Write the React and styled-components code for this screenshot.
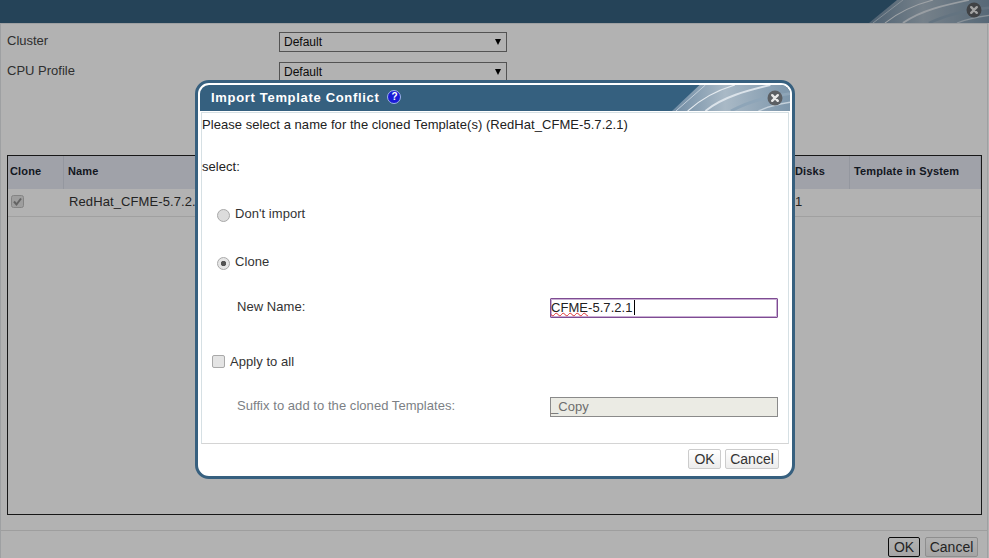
import React from 'react'
import styled, { createGlobalStyle } from 'styled-components'

const Global = createGlobalStyle`
  html, body { margin: 0; padding: 0; background: #fff; }
  body { font: 13px 'Liberation Sans', Arial, sans-serif; color: #444; overflow: hidden; }
`

const Page = styled.div`
  position: relative;
  width: 989px;
  height: 558px;
  display: flex;
  flex-direction: column;
  overflow: hidden;
  background: #fff;
`

const Glass = styled.div`
  position: absolute;
  inset: 0;
  background: rgba(0, 0, 0, 0.3);
`

/* ---- dialog header, shared by both dialogs ---- */
const HeaderBar = styled.div`
  position: relative;
  flex: none;
  height: ${p => p.$height}px;
  background: #35607f;
  display: flex;
  align-items: center;
  overflow: hidden;
`

const Swoosh = styled.svg`
  position: absolute;
  right: 0;
  top: 0;
  height: 100%;
  width: ${p => p.$width}px;
`

const CloseIcon = styled.svg`
  position: absolute;
  right: ${p => p.$right}px;
  top: ${p => p.$top}px;
  width: 16px;
  height: 16px;
`

const HeaderArt = ({ width }) => (
  <Swoosh $width={width} viewBox="0 0 120 27" preserveAspectRatio="none">
    <defs>
      <linearGradient id="sw" x1="0" y1="0" x2="1" y2="0">
        <stop offset="0" stopColor="#6f8ba3" />
        <stop offset="0.45" stopColor="#a9b9c6" />
        <stop offset="1" stopColor="#7d96ab" />
      </linearGradient>
    </defs>
    <polygon points="0,27 28,0 120,0 120,27" fill="url(#sw)" />
    <path d="M4 27 L34 0" stroke="#d5dee6" strokeWidth="0.8" fill="none" />
    <path d="M16 27 C30 14 44 6 64 0" stroke="#e4eaef" strokeWidth="1.2" fill="none" />
    <path d="M34 27 C52 12 76 6 100 0" stroke="#dbe3ea" strokeWidth="2" fill="none" />
    <path d="M60 27 C76 18 96 12 120 9" stroke="#8ea5b8" strokeWidth="3" fill="none" />
    <path d="M88 27 C98 22 108 20 120 18" stroke="#c5d1db" strokeWidth="1.5" fill="none" />
  </Swoosh>
)

const Close = ({ right, top }) => (
  <CloseIcon $right={right} $top={top} viewBox="0 0 16 16">
    <circle cx="8" cy="8" r="7.5" fill="#5c5f63" />
    <path d="M5.2 5.2 L10.8 10.8 M10.8 5.2 L5.2 10.8" stroke="#e8e8e8" strokeWidth="2.4" strokeLinecap="round" />
  </CloseIcon>
)

/* ---- dialog behind ---- */
const BackBody = styled.div`
  flex: 1;
  display: flex;
  flex-direction: column;
  border-top: 1px solid #e2e6e9;
  border-left: 1px solid #e2e6e9;
  border-right: 1px solid #e2e6e9;
  margin-right: 1px;
  min-height: 0;
`

const Form = styled.div`
  padding: 8px 0 0 6px;
  height: 123px;
  display: flex;
  flex-direction: column;
  gap: 10px;
`

const FormRow = styled.div`
  display: grid;
  grid-template-columns: 272px 228px;
  height: 20px;
  line-height: 17px;
`

const Select = styled.div`
  box-sizing: border-box;
  height: 20px;
  border: 1px solid #777;
  background: #fff;
  padding: 1px 4px;
  display: flex;
  justify-content: space-between;
  align-items: center;
  color: #111;
  font-size: 12px;
`

const Caret = styled.span`
  width: 0;
  height: 0;
  margin-right: 1px;
  border-left: 3.5px solid transparent;
  border-right: 3.5px solid transparent;
  border-top: 6px solid #000;
`

const Table = styled.div`
  flex: none;
  box-sizing: border-box;
  margin: 0 5px 0 6px;
  height: 360px;
  border: 1px solid #222;
`

const HeadRow = styled.div`
  display: grid;
  grid-template-columns: 56px 728px 58px 1fr;
  height: 33px;
  background: #e6e9f3;
`

const HeadCell = styled.div`
  display: flex;
  align-items: center;
  padding: 0 0 4px ${p => p.$pad}px;
  border-right: 1px solid #d5d8e4;
  font-size: 11px;
  font-weight: bold;
  letter-spacing: 0.15px;
  color: #1a2430;
`

const DataRow = styled.div`
  display: grid;
  grid-template-columns: 56px 728px 58px 1fr;
  height: 27px;
  border-bottom: 1px solid #e6e6e6;
`

const DataCell = styled.div`
  display: flex;
  align-items: center;
  padding: 0 0 3px ${p => p.$pad}px;
  letter-spacing: 0.1px;
  font-size: 13px;
  color: #333;
`

const CheckedBox = styled.svg`
  width: 13px;
  height: 13px;
`

const BackFooter = styled.div`
  flex: 1;
  margin-top: 15px;
  border-top: 1px solid #e2e2e2;
  display: flex;
  justify-content: flex-end;
  align-items: flex-start;
  gap: 5px;
  padding: 6px 9px 0 0;
`

const Button = styled.button`
  box-sizing: border-box;
  height: 20px;
  padding: 0;
  width: ${p => p.$width}px;
  font: 14px 'Liberation Sans', Arial, sans-serif;
  color: #333;
  background: linear-gradient(#fff, #ececec);
  border: 1px solid ${p => (p.$focus ? '#111' : '#ccc')};
  border-radius: 2px;
`

/* ---- modal on top ---- */
const Modal = styled.div`
  position: absolute;
  left: 195px;
  top: 80px;
  box-sizing: border-box;
  width: 600px;
  height: 399px;
  background: #fff;
  border: 3px solid #37607f;
  border-radius: 14px;
  padding: 2px;
  display: flex;
  flex-direction: column;
`

const ModalHeader = styled(HeaderBar)`
  box-sizing: border-box;
  border-radius: 9px 9px 0 0;
  margin-bottom: 1px;
  gap: 8px;
  padding: 0 0 2px 11px;
`

const Title = styled.div`
  color: #fff;
  font-size: 13px;
  font-weight: bold;
  letter-spacing: 0.68px;
`

const Help = styled.span`
  box-sizing: border-box;
  width: 14px;
  height: 14px;
  border-radius: 50%;
  background: #1a1ad6;
  border: 1px solid #9db4e8;
  color: #fff;
  font-size: 10px;
  font-weight: bold;
  text-align: center;
  line-height: 12px;
`

const ModalBody = styled.div`
  box-sizing: border-box;
  height: 332px;
  margin: 0 1px;
  border: 1px solid #d6e0e4;
  border-bottom-color: #d4d4d4;
  padding: 3px 0 0 0;
  letter-spacing: 0.05px;
  display: flex;
  flex-direction: column;
`

const Line = styled.div`
  height: 17px;
  line-height: 17px;
  color: #222;
  margin-bottom: ${p => p.$after}px;
`

const Choice = styled.label`
  display: flex;
  align-items: center;
  height: 17px;
  line-height: 17px;
  gap: ${p => p.$gap}px;
  padding-left: ${p => p.$left}px;
  margin-bottom: ${p => p.$after}px;
  color: #333;
`

const Radio = styled.input.attrs({ type: 'radio' })`
  appearance: none;
  box-sizing: border-box;
  width: 13px;
  height: 13px;
  margin: 4px 0 0 0;
  border-radius: 50%;
  border: 1px solid #a9a9a9;
  background: #dcdcdc;
  &:checked {
    background: radial-gradient(circle, #555 0 2.4px, #e6e6e6 3px);
  }
`

const Check = styled.input.attrs({ type: 'checkbox' })`
  appearance: none;
  box-sizing: border-box;
  width: 13px;
  height: 13px;
  margin: 0;
  border-radius: 2px;
  border: 1px solid #a9a9a9;
  background: #e4e4e4;
`

const FieldRow = styled.div`
  display: grid;
  grid-template-columns: 313px 228px;
  align-items: start;
  height: 20px;
  line-height: 17px;
  padding-left: 35px;
  margin-bottom: ${p => p.$after}px;
  color: ${p => (p.$muted ? '#7c7f85' : '#333')};
`

const NameInput = styled.div`
  box-sizing: border-box;
  height: 20px;
  border: 1px solid #7e4c92;
  box-shadow: inset 0 0 0 1px #c9aed4;
  border-radius: 1px;
  background: #fff;
  line-height: 18px;
  font-size: 13px;
  color: #222;
  display: flex;
`

const Misspelled = styled.span`
  text-decoration: underline wavy #d33;
  text-decoration-thickness: 1px;
  text-underline-offset: 0;
`

const TextCaret = styled.span`
  width: 1px;
  height: 15px;
  margin: 1px 0 0 1px;
  background: #000;
`

const DisabledInput = styled.div`
  box-sizing: border-box;
  height: 20px;
  border: 1px solid #8a8a8a;
  background: #ebebe4;
  line-height: 18px;
  font-size: 13px;
  color: #6d6d6d;
`

const ModalFooter = styled.div`
  flex: 1;
  display: flex;
  justify-content: flex-end;
  align-items: flex-start;
  gap: 4px;
  padding: 5px 11px 0 0;
`

export default function App() {
  return (
    <Page>
      <Global />
      <HeaderBar $height={23}>
        <HeaderArt width={120} />
        <Close right={7} top={2} />
      </HeaderBar>
      <BackBody>
        <Form>
          <FormRow>
            <span>Cluster</span>
            <Select>Default<Caret /></Select>
          </FormRow>
          <FormRow>
            <span>CPU Profile</span>
            <Select>Default<Caret /></Select>
          </FormRow>
        </Form>
        <Table>
          <HeadRow>
            <HeadCell $pad={2}>Clone</HeadCell>
            <HeadCell $pad={4}>Name</HeadCell>
            <HeadCell $pad={3}>Disks</HeadCell>
            <HeadCell $pad={4}>Template in System</HeadCell>
          </HeadRow>
          <DataRow>
            <DataCell $pad={3}>
              <CheckedBox viewBox="0 0 13 13">
                <rect x="0.5" y="0.5" width="12" height="12" rx="2" fill="#e2e2e2" stroke="#bdbdbd" />
                <path d="M3 6.5 L5.5 9.5 L10 3.5" fill="none" stroke="#8f8f8f" strokeWidth="2" />
              </CheckedBox>
            </DataCell>
            <DataCell $pad={5}>RedHat_CFME-5.7.2.1</DataCell>
            <DataCell $pad={3}>1</DataCell>
            <DataCell />
          </DataRow>
        </Table>
        <BackFooter>
          <Button $width={32} $focus>OK</Button>
          <Button $width={53}>Cancel</Button>
        </BackFooter>
      </BackBody>
      <Glass />
      <Modal>
        <ModalHeader $height={26}>
          <Title>Import Template Conflict</Title>
          <Help>?</Help>
          <HeaderArt width={118} />
          <Close right={7} top={5} />
        </ModalHeader>
        <ModalBody>
          <Line $after={25}>Please select a name for the cloned Template(s) (RedHat_CFME-5.7.2.1)</Line>
          <Line $after={30}>select:</Line>
          <Choice $left={15} $gap={5} $after={31}><Radio name="mode" />Don't import</Choice>
          <Choice $left={15} $gap={5} $after={28}><Radio name="mode" defaultChecked />Clone</Choice>
          <FieldRow $after={35}>
            <span>New Name:</span>
            <NameInput><Misspelled>CFME</Misspelled>-5.7.2.1<TextCaret /></NameInput>
          </FieldRow>
          <Choice $left={10} $gap={5} $after={27}><Check />Apply to all</Choice>
          <FieldRow $muted $after={0}>
            <span>Suffix to add to the cloned Templates:</span>
            <DisabledInput>_Copy</DisabledInput>
          </FieldRow>
        </ModalBody>
        <ModalFooter>
          <Button $width={33}>OK</Button>
          <Button $width={54}>Cancel</Button>
        </ModalFooter>
      </Modal>
    </Page>
  )
}
